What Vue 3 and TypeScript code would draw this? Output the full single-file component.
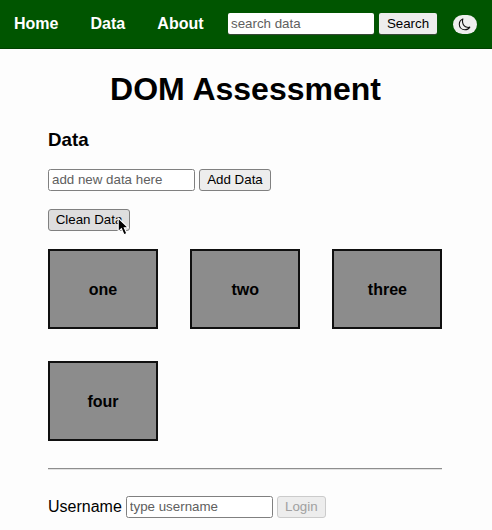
<script setup lang="ts">
import { ref } from 'vue'

const links: string[] = ['Home', 'Data', 'About']
const items = ref<string[]>(['one', 'two', 'three', 'four'])
const search = ref('')
const entry = ref('')
const username = ref('')

function addItem(): void {
  const value = entry.value.trim()
  if (value) items.value.push(value)
  entry.value = ''
}
</script>

<template>
  <div class="page">
    <header class="bar">
      <nav class="links">
        <a v-for="link in links" :key="link" class="link">{{ link }}</a>
      </nav>
      <form class="search" @submit.prevent>
        <input v-model="search" class="field" type="text" placeholder="search data" />
        <button class="btn btn-search">Search</button>
      </form>
      <button class="theme" aria-label="Toggle theme">
        <svg width="13" height="13" viewBox="0 0 13 13">
          <path
            d="M4.9 0.9C3 1.6 1.3 3.6 1.3 6.2C1.3 9.4 3.7 11.8 6.9 11.8C9 11.8 10.8 10.8 11.8 9.1C10.9 9.5 10 9.5 9.2 9.3C6.7 8.7 5 6.7 4.6 4.3C4.4 3.1 4.5 1.9 4.9 0.9Z"
          />
        </svg>
      </button>
    </header>

    <main class="content">
      <h1 class="title">DOM Assessment</h1>
      <h3 class="section-title">Data</h3>
      <form class="row" @submit.prevent="addItem">
        <input v-model="entry" class="field" type="text" placeholder="add new data here" />
        <button class="btn btn-add">Add Data</button>
      </form>
      <div class="row clean-row">
        <button class="btn btn-clean" type="button" @click="items = []">Clean Data</button>
        <svg class="pointer" width="14" height="20" viewBox="0 0 14 20">
          <path d="M1.2 1V14.6L4.4 11.7L7 17.7L9.8 16.5L7.3 10.7H11.2Z" />
        </svg>
      </div>
      <section class="grid">
        <div v-for="item in items" :key="item" class="card">{{ item }}</div>
      </section>
      <hr class="divider" />
      <form class="row" @submit.prevent>
        <label class="label" for="username">Username</label>
        <input id="username" v-model="username" class="field" type="text" placeholder="type username" />
        <button class="btn btn-login" :disabled="!username">Login</button>
      </form>
    </main>
  </div>
</template>

<style>
body {
  margin: 0;
  background: #fdfdfd;
}
</style>

<style scoped>
.page {
  height: 530px;
  overflow: hidden;
  color: #000;
  font: 16px/18px "Liberation Sans", Arial, sans-serif;
}
.bar {
  display: flex;
  align-items: center;
  box-sizing: border-box;
  height: 49px;
  padding: 0 15px 1px 14px;
  background: #005500;
  border-bottom: 1px solid #004000;
}
.links {
  display: flex;
  gap: 32.1px;
  width: 214px;
}
.link {
  color: #fff;
  font-weight: 700;
}
.search,
.row {
  display: flex;
  align-items: center;
}
.search {
  gap: 5px;
}
.row {
  gap: 4px;
  height: 22px;
}
.field {
  box-sizing: border-box;
  width: 147px;
  height: 22px;
  margin: 0;
  padding: 0 3px 1px;
  border: 1px solid #808080;
  border-radius: 2.5px;
  background: #fff;
  color: #000;
  font: 13.333px "Liberation Sans", Arial, sans-serif;
  outline: none;
}
.field::placeholder {
  color: #606060;
  opacity: 1;
}
.btn {
  box-sizing: border-box;
  height: 22px;
  margin: 0;
  padding: 0 0 2px;
  border: 1px solid #808080;
  border-radius: 3px;
  background: #ededed;
  color: #000;
  font: 13.333px "Liberation Sans", Arial, sans-serif;
}
.search .field,
.search .btn {
  height: 21px;
  border: 0;
  border-radius: 2px;
  box-shadow: 0 1px 1px #3c483c;
}
.search .field {
  width: 146px;
  padding: 0 3px 1px;
}
.search .btn {
  padding: 0 0 1px;
}
.btn-search {
  width: 58px;
}
.btn-add {
  width: 72px;
}
.btn-clean {
  width: 82px;
  background: #dedede;
}
.btn-login {
  width: 49px;
}
.btn-login:disabled {
  background: #ededed;
  border-color: #cbcbcb;
  color: #a0a0a0;
}
.theme {
  display: flex;
  align-items: center;
  justify-content: center;
  width: 24px;
  height: 19px;
  margin: 1px 0 0 16px;
  padding: 0 1px 0 0;
  border: 0;
  border-radius: 10px;
  background: #efefef;
}
.theme path {
  fill: none;
  stroke: #111;
  stroke-width: 1.1;
  stroke-linejoin: round;
}
.content {
  width: 395px;
  padding: 22px 0 0 48px;
}
.title {
  margin: 0;
  font-size: 32px;
  line-height: 37px;
  text-align: center;
}
.section-title {
  margin: 21px 0 18px;
  font-size: 18.72px;
  line-height: 22px;
}
.clean-row {
  position: relative;
  margin-top: 18px;
}
.pointer {
  position: absolute;
  left: 69px;
  top: 8px;
}
.pointer path {
  fill: #000;
  stroke: #fff;
  stroke-width: 1.1;
}
.grid {
  display: grid;
  grid-template-columns: repeat(3, 110px);
  justify-content: space-between;
  row-gap: 32px;
  width: 394.4px;
  margin-top: 18px;
}
.card {
  display: flex;
  align-items: center;
  justify-content: center;
  box-sizing: border-box;
  height: 80px;
  padding-top: 2px;
  border: 2px solid #101010;
  background: #8c8c8c;
  font-weight: 700;
}
.divider {
  width: 394px;
  height: 1px;
  margin: 27px 0 26px;
  border: 0;
  border-top: 1px solid #8e8e8e;
  background: #e2e2e2;
}
.label {
  margin-bottom: 1px;
}
</style>
